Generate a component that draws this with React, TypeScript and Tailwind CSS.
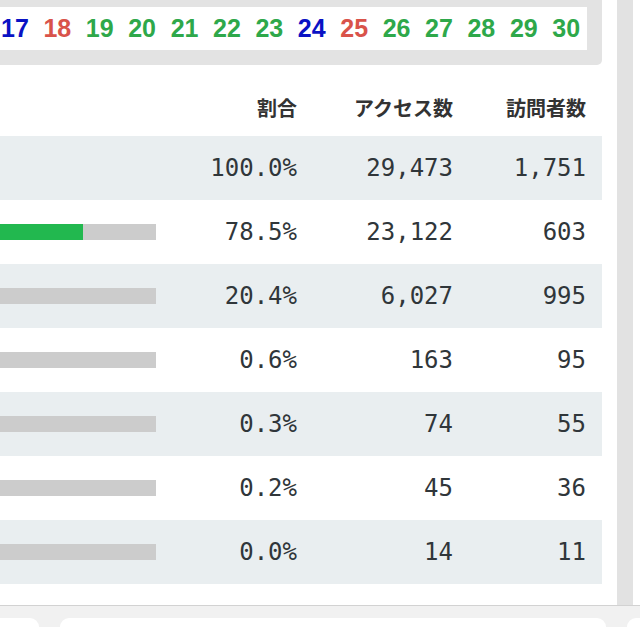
import React from "react";

const days = [
  { d: 17, c: "text-[#0a12c4]" },
  { d: 18, c: "text-[#d9534a]" },
  { d: 19, c: "text-[#2ea84a]" },
  { d: 20, c: "text-[#2ea84a]" },
  { d: 21, c: "text-[#2ea84a]" },
  { d: 22, c: "text-[#2ea84a]" },
  { d: 23, c: "text-[#2ea84a]" },
  { d: 24, c: "text-[#0a12c4]" },
  { d: 25, c: "text-[#d9534a]" },
  { d: 26, c: "text-[#2ea84a]" },
  { d: 27, c: "text-[#2ea84a]" },
  { d: 28, c: "text-[#2ea84a]" },
  { d: 29, c: "text-[#2ea84a]" },
  { d: 30, c: "text-[#2ea84a]" },
];

type Row = { pct: number | null; rate: string; access: string; visitors: string };

const rows: Row[] = [
  { pct: null, rate: "100.0%", access: "29,473", visitors: "1,751" },
  { pct: 78.5, rate: "78.5%", access: "23,122", visitors: "603" },
  { pct: 20.4, rate: "20.4%", access: "6,027", visitors: "995" },
  { pct: 0.6, rate: "0.6%", access: "163", visitors: "95" },
  { pct: 0.3, rate: "0.3%", access: "74", visitors: "55" },
  { pct: 0.2, rate: "0.2%", access: "45", visitors: "36" },
  { pct: 0.0, rate: "0.0%", access: "14", visitors: "11" },
  { pct: 0.0, rate: "0.0%", access: "8", visitors: "7" },
];

const mono = "font-['DejaVu_Sans_Mono',monospace]";

function StatRow({ row, shaded }: { row: Row; shaded: boolean }) {
  return (
    <div
      className={`grid h-[64px] grid-cols-[156px_141px_156px_133px] items-center pr-[16px] text-[24px] text-[#30363a] ${mono} ${
        shaded ? "bg-[#e9eef0]" : "bg-white"
      }`}
    >
      <div className="flex justify-end overflow-hidden">
        {row.pct !== null && (
          <div className="h-[16px] w-[340px] shrink-0 bg-[#cccccc]">
            <div className="h-full bg-[#22b84f]" style={{ width: `${row.pct}%` }} />
          </div>
        )}
      </div>
      <div className="text-right">{row.rate}</div>
      <div className="text-right">{row.access}</div>
      <div className="text-right">{row.visitors}</div>
    </div>
  );
}

export default function App() {
  return (
    <div className="relative flex h-[627px] w-[640px] overflow-hidden bg-white">
      <div className="w-[602px] shrink-0">
        <div className="h-[65px] rounded-br-[5px] bg-[#e3e3e3] pr-[15px] pt-[7px]">
          <div className="flex h-[43px] items-center gap-[14.6px] bg-white pl-px font-['Liberation_Sans',Arial,sans-serif] text-[25px] font-bold">
            {days.map((x) => (
              <span key={x.d} className={x.c}>
                {x.d}
              </span>
            ))}
          </div>
        </div>

        <div className="grid h-[71px] grid-cols-[156px_141px_156px_133px] items-end pb-[14px] pr-[16px] font-['Noto_Sans_CJK_JP',sans-serif] text-[20px] leading-[28px] font-bold text-[#333333]">
          <div />
          <div className="text-right">割合</div>
          <div className="text-right">アクセス数</div>
          <div className="text-right">訪問者数</div>
        </div>

        {rows.map((r, i) => (
          <StatRow key={i} row={r} shaded={i % 2 === 0} />
        ))}
      </div>

      <div className="ml-[15px] h-full w-[16px] shrink-0 bg-[#e2e2e2]" />

      <div className="absolute inset-x-0 bottom-0 top-[605px] border-t border-[#d2d2d2] bg-[#f1f1f1]">
        <div className="flex h-full items-end">
          <div className="ml-[-20px] h-[9px] w-[59px] shrink-0 rounded-t-[12px] bg-white" />
          <div className="ml-[21px] h-[9px] w-[546px] shrink-0 rounded-t-[12px] bg-white" />
          <div className="ml-[21px] h-[9px] w-[40px] shrink-0 rounded-t-[12px] bg-white" />
        </div>
      </div>
    </div>
  );
}
